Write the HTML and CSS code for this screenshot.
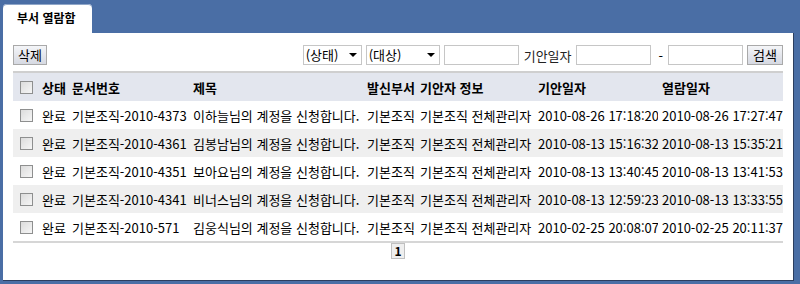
FILE: index.html
```html
<!DOCTYPE html>
<html lang="ko">
  <head>
    <meta charset="UTF-8" />
    <title>부서 열람함</title>
    <link rel="stylesheet" href="styles.css">
  </head>
  <body>
    <div class="tabs">
      <div class="tab">부서 열람함</div>
    </div>
    <div class="panel">
      <div class="toolbar">
        <button class="btn">삭제</button>
        <div class="search">
          <span class="select w-state">(상태)<i class="caret"></i></span>
          <span class="select w-target">(대상)<i class="caret"></i></span>
          <input class="field" type="text" />
          <span class="label">기안일자</span>
          <input class="field" type="text" />
          <span class="dash">-</span>
          <input class="field" type="text" />
          <button class="btn btn-wide">검색</button>
        </div>
      </div>

      <table class="list">
        <colgroup>
          <col class="c-check" />
          <col class="c-state" />
          <col class="c-no" />
          <col class="c-title" />
          <col class="c-dept" />
          <col class="c-writer" />
          <col class="c-date" />
          <col class="c-date2" />
        </colgroup>
        <thead>
          <tr>
            <th><span class="check"></span></th>
            <th>상태</th>
            <th>문서번호</th>
            <th>제목</th>
            <th>발신부서</th>
            <th>기안자 정보</th>
            <th>기안일자</th>
            <th>열람일자</th>
          </tr>
        </thead>
        <tbody>
          <tr>
            <td><span class="check"></span></td>
            <td>완료</td>
            <td>기본조직-2010-4373</td>
            <td>이하늘님의 계정을 신청합니다.</td>
            <td>기본조직</td>
            <td>기본조직 전체관리자</td>
            <td>2010-08-26 17:18:20</td>
            <td>2010-08-26 17:27:47</td>
          </tr>
          <tr>
            <td><span class="check"></span></td>
            <td>완료</td>
            <td>기본조직-2010-4361</td>
            <td>김봉남님의 계정을 신청합니다.</td>
            <td>기본조직</td>
            <td>기본조직 전체관리자</td>
            <td>2010-08-13 15:16:32</td>
            <td>2010-08-13 15:35:21</td>
          </tr>
          <tr>
            <td><span class="check"></span></td>
            <td>완료</td>
            <td>기본조직-2010-4351</td>
            <td>보아요님의 계정을 신청합니다.</td>
            <td>기본조직</td>
            <td>기본조직 전체관리자</td>
            <td>2010-08-13 13:40:45</td>
            <td>2010-08-13 13:41:53</td>
          </tr>
          <tr>
            <td><span class="check"></span></td>
            <td>완료</td>
            <td>기본조직-2010-4341</td>
            <td>비너스님의 계정을 신청합니다.</td>
            <td>기본조직</td>
            <td>기본조직 전체관리자</td>
            <td>2010-08-13 12:59:23</td>
            <td>2010-08-13 13:33:55</td>
          </tr>
          <tr>
            <td><span class="check"></span></td>
            <td>완료</td>
            <td>기본조직-2010-571</td>
            <td>김웅식님의 계정을 신청합니다.</td>
            <td>기본조직</td>
            <td>기본조직 전체관리자</td>
            <td>2010-02-25 20:08:07</td>
            <td>2010-02-25 20:11:37</td>
          </tr>
        </tbody>
      </table>

      <div class="pager">
        <span class="page">1</span>
      </div>
    </div>
  </body>
</html>
```

FILE: styles.css
```css
/* Base */
body {
  margin: 0;
  width: 800px;
  height: 284px;
  background-color: #4a6ea5;
  font-family: "Noto Sans CJK KR", "DejaVu Sans", sans-serif;
  font-size: 13px;
  color: #000;
  overflow: hidden;
}

/* Tabs */
.tabs {
  display: flex;
  padding: 4px 0 0 3px;
  height: 29px;
}
.tab {
  width: 89px;
  background-color: #fff;
  border-radius: 4px 4px 0 0;
  box-shadow: inset 0 1px 0 #8fa6c8;
  font-weight: bold;
  font-size: 12px;
  line-height: 28px;
  padding-left: 14px;
  box-sizing: border-box;
}

/* Panel */
.panel {
  margin-left: 3px;
  width: 791px;
  height: 248px;
  background-color: #fff;
  border-right: 1px solid #2c3e5e;
  border-bottom: 1px solid #2c3e5e;
  box-sizing: border-box;
  padding: 12px 10px 0 10px;
}

/* Toolbar */
.toolbar {
  display: flex;
  justify-content: space-between;
  align-items: center;
  height: 20px;
  margin-bottom: 6px;
}
.search {
  display: flex;
  align-items: center;
  gap: 4px;
}
.btn {
  font-family: inherit;
  font-size: 13px;
  height: 20px;
  padding: 0 4px;
  border: 1px solid #a9a9a9;
  background: linear-gradient(#f4f5f8, #d6d9e2);
  color: #000;
  line-height: 16px;
}
.btn-wide {
  padding: 0 5px;
}
.select {
  display: flex;
  align-items: center;
  justify-content: space-between;
  height: 20px;
  box-sizing: border-box;
  border: 1px solid #c6c6c6;
  padding: 0 4px 0 2px;
  line-height: 18px;
}
.w-state {
  width: 59px;
}
.w-target {
  width: 74px;
}
.caret {
  width: 0;
  height: 0;
  border-left: 4px solid transparent;
  border-right: 4px solid transparent;
  border-top: 4px solid #000;
}
.field {
  width: 75px;
  height: 20px;
  box-sizing: border-box;
  border: 1px solid #c6c6c6;
  margin: 0;
  padding: 0;
}
.label {
  margin-left: 1px;
  color: #222;
}
.dash {
  padding: 0 1px 0 4px;
}

/* List */
.list {
  width: 770px;
  border-collapse: collapse;
  table-layout: fixed;
  border-top: 2px solid #cfcfcf;
  border-bottom: 2px solid #d6d6d6;
  white-space: nowrap;
}
.list th,
.list td {
  height: 28px;
  padding: 0 0 0 4px;
  text-align: left;
  overflow: hidden;
}
.list th {
  background-color: #e3e6ee;
  font-weight: bold;
}
.list tbody tr:nth-child(even) td {
  background-color: #efefef;
}
.list th:first-child,
.list td:first-child {
  padding-left: 7px;
}
.c-check { width: 25px; }
.c-state { width: 30px; }
.c-no { width: 121px; }
.c-title { width: 174px; }
.c-dept { width: 53px; }
.c-writer { width: 118px; }
.c-date { width: 124px; }
.c-date2 { width: 125px; }

.check {
  display: block;
  width: 11px;
  height: 11px;
  border: 1px solid #8e8f8f;
  background: linear-gradient(135deg, #dcdcdc, #f6f6f6);
}

/* Pager */
.pager {
  display: flex;
  justify-content: center;
}
.page {
  border: 1px solid #c0c0c0;
  background-color: #efefef;
  font-weight: bold;
  font-size: 12px;
  padding: 0 2px;
  line-height: 14px;
}
```
